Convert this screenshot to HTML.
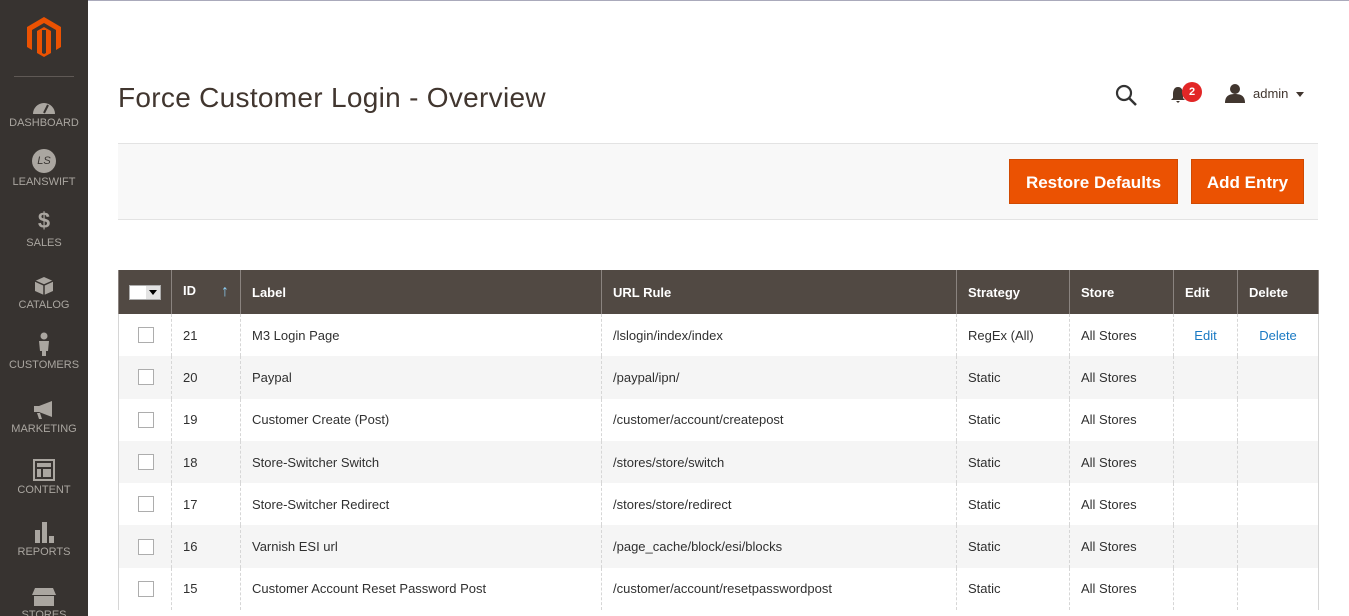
<!DOCTYPE html>
<html><head><style>
*{margin:0;padding:0;box-sizing:border-box}
html,body{width:1349px;height:616px;overflow:hidden}
body{background:#fff;font-family:"Liberation Sans",sans-serif;position:relative;color:#303030}
.side{position:absolute;left:0;top:0;width:88px;height:616px;background:#373330}
.topline{position:absolute;left:88px;top:0;right:0;height:1px;background:#aab}
.nav{position:absolute;left:0;width:88px;text-align:center;color:#aaa6a0;font-size:11px}
.nav .ic{height:22px;margin:0 auto 3px;display:flex;justify-content:center;align-items:flex-end}
h1{position:absolute;left:118px;top:82px;font-size:28px;font-weight:normal;color:#41362f;letter-spacing:0.3px}
.bar{position:absolute;left:118px;top:143px;width:1200px;height:77px;background:#f8f8f8;border-top:1px solid #e3e3e3;border-bottom:1px solid #e3e3e3}
.btn{position:absolute;top:159px;height:45px;background:#eb5202;color:#fff;font-size:17px;font-weight:bold;line-height:45px;text-align:center;border:1px solid #d04a02}
table{position:absolute;left:118px;top:270px;border-collapse:collapse;width:1201px;font-size:13px}
th{background:#514943;color:#fff;text-align:left;font-weight:bold;height:44px;padding:0 11px;border-left:1px solid #8a837f;border-right:1px solid #8a837f}
td{height:42.3px;padding:0 11px;border-left:1px dashed #d6d6d6;color:#303030}
tr:nth-child(odd) td{background:#f5f5f5}
td:first-child{border-left:1px solid #d6d6d6}
td:last-child{border-right:1px solid #d6d6d6}
.cb{width:16px;height:16px;border:1px solid #adadad;background:#fff;margin-left:8px}
a{color:#1979c3;text-decoration:none}
</style></head><body>
<div class="side">
<svg style="position:absolute;left:27px;top:17px" width="34" height="40" viewBox="0 0 34 40"><path d="M17 0L34 10V30L29 33V13L17 6L5 13V33L0 30V10Z M17 10L24 14V36L17 40L10 36V14Z" fill="#eb5202"/><path d="M15 13L19 13V36L17 37L15 36Z" fill="#373330"/></svg>
<div style="position:absolute;left:14px;top:76px;width:60px;height:1px;background:#5f5955"></div>
<div class="nav" style="top:92px"><div class="ic"><svg width="24" height="16"><path d="M1 16A11 11 0 0 1 23 16Z" fill="#aaa6a0"/><path d="M12 15L16 7" stroke="#373330" stroke-width="2"/></svg></div>DASHBOARD</div>
<div class="nav" style="top:151px"><div class="ic"><div style="width:24px;height:24px;border-radius:50%;background:#aaa6a0;color:#373330;font-style:italic;font-size:11px;line-height:24px">LS</div></div>LEANSWIFT</div>
<div class="nav" style="top:212px"><div class="ic" style="font-size:22px;font-weight:bold;color:#aaa6a0">$</div>SALES</div>
<div class="nav" style="top:274px"><div class="ic"><svg width="20" height="20"><path d="M10 1L19 5V15L10 19L1 15V5Z" fill="#aaa6a0"/><path d="M1 5L10 9L19 5M10 9V19" stroke="#373330" stroke-width="1.5" fill="none"/></svg></div>CATALOG</div>
<div class="nav" style="top:334px"><div class="ic"><svg width="14" height="24"><circle cx="7" cy="4" r="3.5" fill="#aaa6a0"/><path d="M2 9H12L11 19H9V24H5V19H3Z" fill="#aaa6a0"/></svg></div>CUSTOMERS</div>
<div class="nav" style="top:398px"><div class="ic"><svg width="24" height="20"><path d="M2 6H7L20 1V17L7 12H2Z M8 13L10 19H7L5 13Z" fill="#aaa6a0"/></svg></div>MARKETING</div>
<div class="nav" style="top:459px"><div class="ic"><svg width="22" height="22"><rect x="1" y="1" width="20" height="20" fill="none" stroke="#aaa6a0" stroke-width="2"/><rect x="4" y="4" width="14" height="4" fill="#aaa6a0"/><rect x="4" y="10" width="4" height="8" fill="#aaa6a0"/><rect x="10" y="10" width="8" height="8" fill="#aaa6a0"/></svg></div>CONTENT</div>
<div class="nav" style="top:521px"><div class="ic"><svg width="22" height="22"><rect x="2" y="9" width="5" height="13" fill="#aaa6a0"/><rect x="9" y="1" width="5" height="21" fill="#aaa6a0"/><rect x="16" y="15" width="5" height="7" fill="#aaa6a0"/></svg></div>REPORTS</div>
<div class="nav" style="top:584px"><div class="ic"><svg width="24" height="20"><path d="M3 2H21L24 9H0Z M2 10H22V20H2Z" fill="#aaa6a0"/></svg></div>STORES</div>
</div>
<div class="topline"></div>
<h1>Force Customer Login - Overview</h1>
<svg style="position:absolute;left:1115px;top:84px" width="24" height="24"><circle cx="9" cy="9" r="7" stroke="#333" stroke-width="2.2" fill="none"/><path d="M14 14L21 21" stroke="#333" stroke-width="2.5"/></svg>
<svg style="position:absolute;left:1170px;top:86px" width="16" height="18"><path d="M8 1C4 1 3 5 3 8V12L1 14H15L13 12V8C13 5 12 1 8 1Z M6 15H10L8 17Z" fill="#41362f"/></svg>
<div style="position:absolute;left:1182px;top:82px;width:20px;height:20px;border-radius:50%;background:#e22626;color:#fff;font-size:11px;font-weight:bold;text-align:center;line-height:20px">2</div>
<svg style="position:absolute;left:1225px;top:83px" width="20" height="20"><circle cx="10" cy="6" r="5" fill="#41362f"/><path d="M0 20C0 13 4 11 10 11C16 11 20 13 20 20Z" fill="#41362f"/></svg>
<div style="position:absolute;left:1253px;top:86px;font-size:13px;color:#41362f">admin</div>
<div style="position:absolute;left:1296px;top:92px;border:4px solid transparent;border-top:5px solid #41362f"></div>
<div class="bar"></div>
<div class="btn" style="left:1009px;width:169px">Restore Defaults</div>
<div class="btn" style="left:1191px;width:113px">Add Entry</div>
<table>
<tr><th style="width:53px;padding:0 10px"><div style="display:flex;width:32px;height:15px;border:1px solid #adadad;background:#fff"><div style="width:16px"></div><div style="flex:1;background:#e3e3e3;position:relative"><div style="position:absolute;left:3px;top:4px;border:4px solid transparent;border-top:5px solid #000"></div></div></div></th><th style="width:69px">ID<span style="float:right;color:#8ed0f6;font-weight:normal;font-size:16px">↑</span></th><th style="width:361px">Label</th><th style="width:355px">URL Rule</th><th style="width:113px">Strategy</th><th style="width:104px">Store</th><th style="width:64px">Edit</th><th>Delete</th></tr>
<tr><td><div class="cb"></div></td><td>21</td><td>M3 Login Page</td><td>/lslogin/index/index</td><td>RegEx (All)</td><td>All Stores</td><td style="text-align:center"><a>Edit</a></td><td style="text-align:center"><a>Delete</a></td></tr>
<tr><td><div class="cb"></div></td><td>20</td><td>Paypal</td><td>/paypal/ipn/</td><td>Static</td><td>All Stores</td><td></td><td></td></tr>
<tr><td><div class="cb"></div></td><td>19</td><td>Customer Create (Post)</td><td>/customer/account/createpost</td><td>Static</td><td>All Stores</td><td></td><td></td></tr>
<tr><td><div class="cb"></div></td><td>18</td><td>Store-Switcher Switch</td><td>/stores/store/switch</td><td>Static</td><td>All Stores</td><td></td><td></td></tr>
<tr><td><div class="cb"></div></td><td>17</td><td>Store-Switcher Redirect</td><td>/stores/store/redirect</td><td>Static</td><td>All Stores</td><td></td><td></td></tr>
<tr><td><div class="cb"></div></td><td>16</td><td>Varnish ESI url</td><td>/page_cache/block/esi/blocks</td><td>Static</td><td>All Stores</td><td></td><td></td></tr>
<tr><td><div class="cb"></div></td><td>15</td><td>Customer Account Reset Password Post</td><td>/customer/account/resetpasswordpost</td><td>Static</td><td>All Stores</td><td></td><td></td></tr>
</table>
</body></html>
